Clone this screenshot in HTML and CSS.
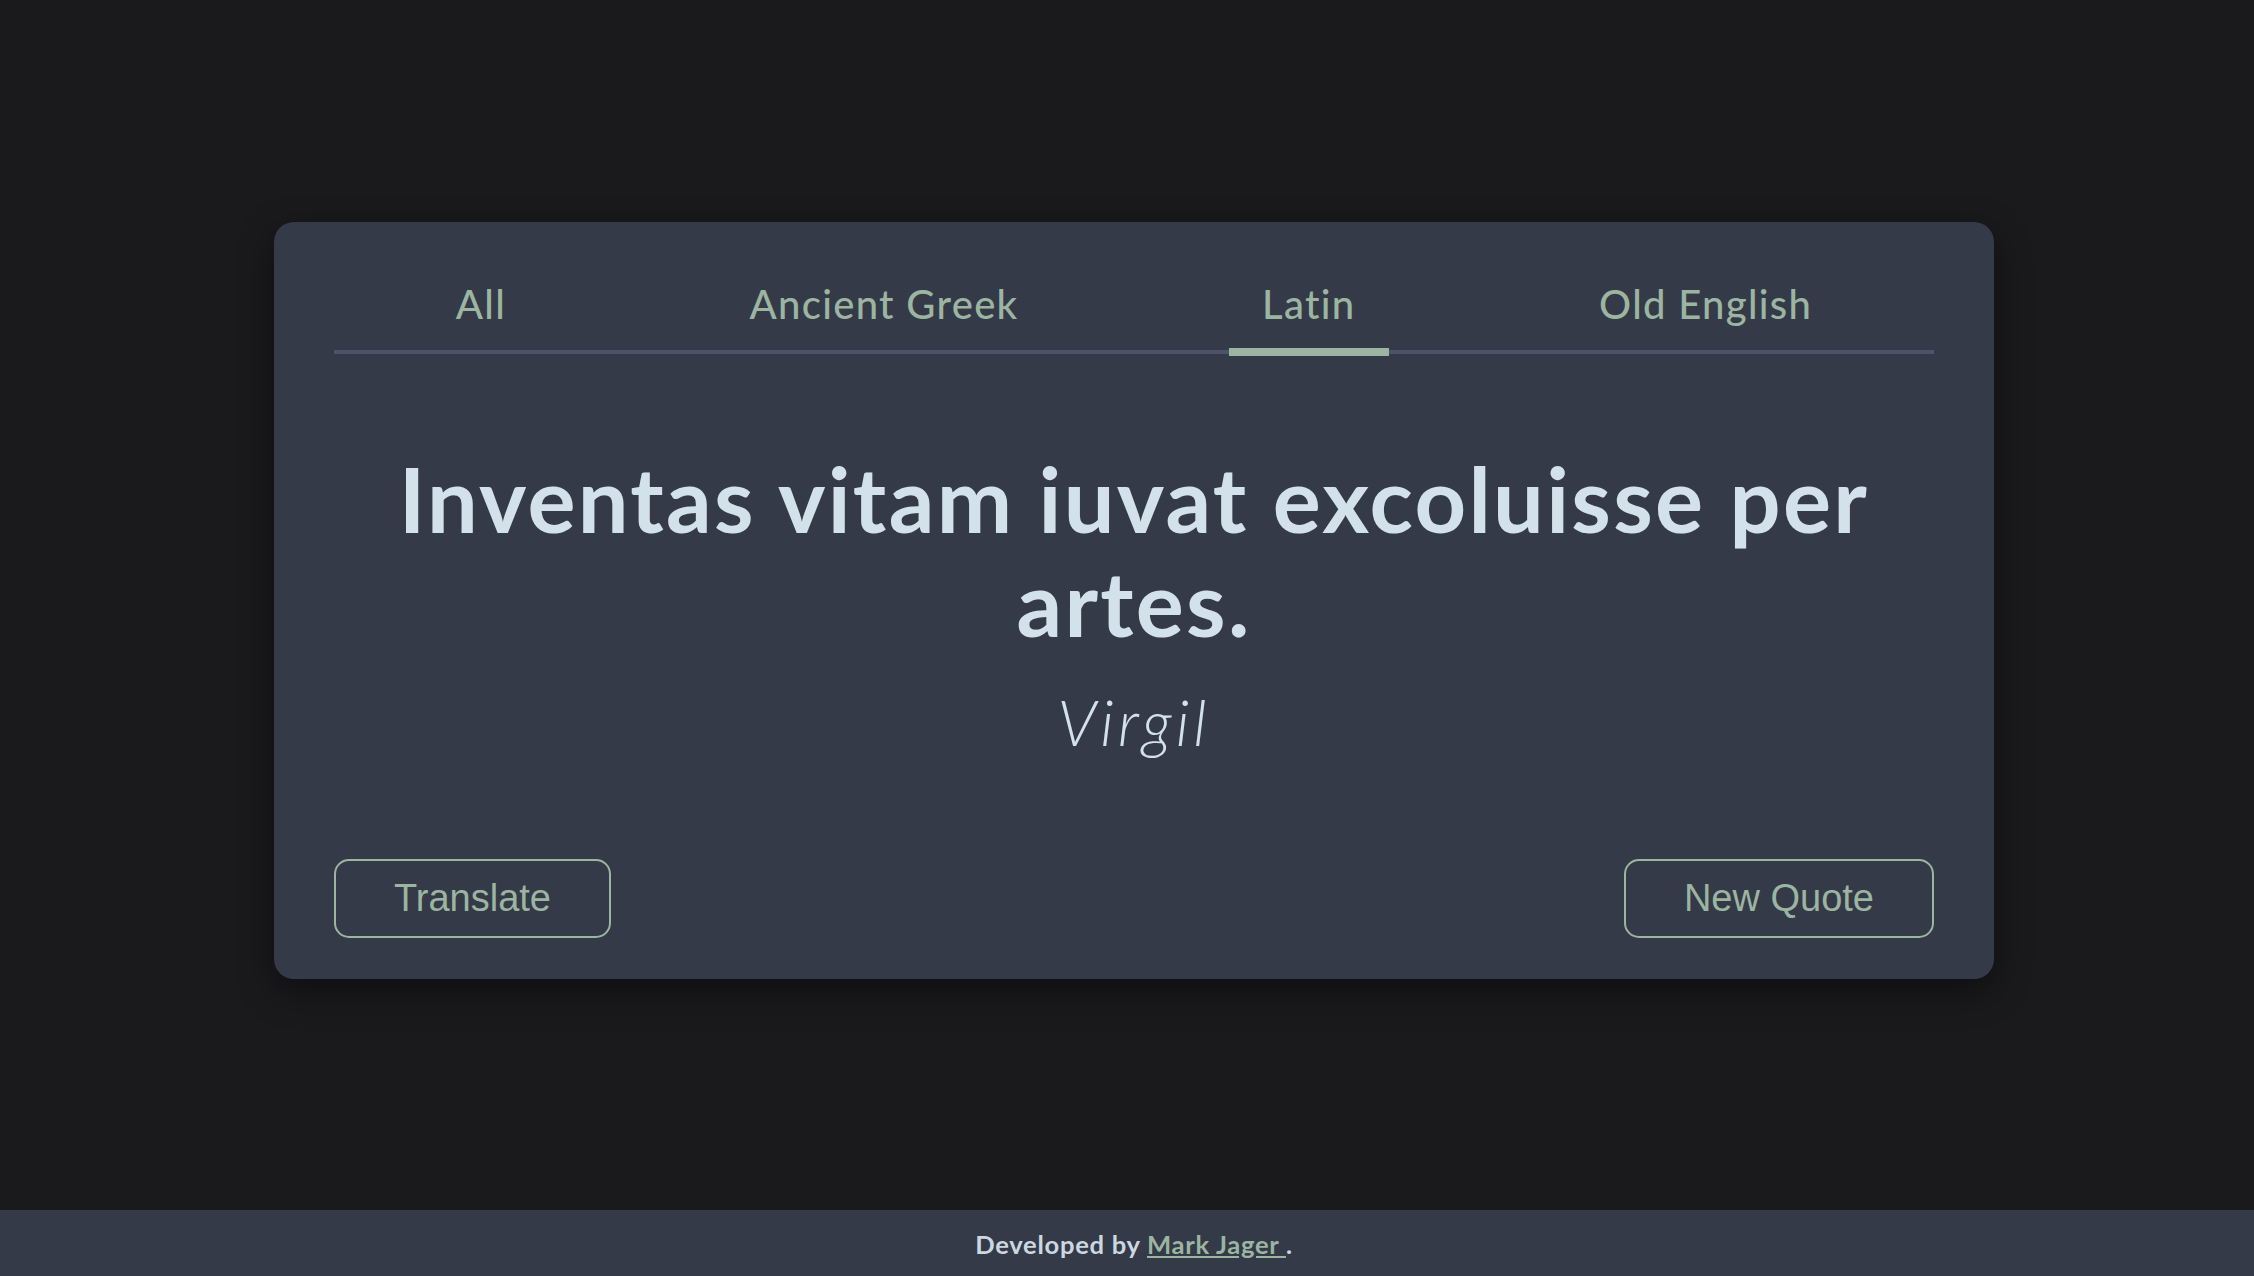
FILE: index.html
```html
<!DOCTYPE html>
<html lang="en">
<head>
<meta charset="utf-8">
<title>Quote Generator</title>
<link rel="stylesheet" href="styles.css">
</head>
<body>
<main class="main">
  <section class="card">
    <nav class="tabs">
      <a class="tab">All</a>
      <a class="tab">Ancient Greek</a>
      <a class="tab active">Latin</a>
      <a class="tab">Old English</a>
    </nav>
    <h1 class="quote">Inventas vitam iuvat excoluisse per artes.</h1>
    <p class="author">Virgil</p>
    <div class="actions">
      <button class="btn">Translate</button>
      <button class="btn">New Quote</button>
    </div>
  </section>
</main>
<footer class="footer">
  Developed by <a class="footer-link">Mark Jager </a>.
</footer>
</body>
</html>
```

FILE: styles.css
```css
html, body {
  margin: 0;
  padding: 0;
}
body {
  background: #1a1a1d;
  min-height: 100vh;
  display: flex;
  flex-direction: column;
  font-family: Lato, "Noto Sans", sans-serif;
}
.main {
  flex: 1;
  display: flex;
  align-items: center;
  justify-content: center;
  padding: 0 0 10px 14px;
}
.card {
  width: 1720px;
  box-sizing: border-box;
  background: #353a49;
  border-radius: 20px;
  padding: 58px 60px 41px;
  box-shadow: 0 12px 36px rgba(0, 0, 0, 0.45);
}
.tabs {
  display: flex;
  justify-content: space-around;
  border-bottom: 4px solid #4b5568;
}
.tab {
  position: relative;
  padding: 0 33px 22px;
  font-size: 40px;
  line-height: 48px;
  font-weight: 500;
  color: #9bb5a0;
  letter-spacing: 1.3px;
  cursor: pointer;
}
.tab.active::after {
  content: "";
  position: absolute;
  left: 0;
  right: 0;
  bottom: -6px;
  height: 8px;
  background: #9bb5a0;
}
.quote {
  margin: 92px 0 0;
  text-align: center;
  font-size: 90px;
  line-height: 104px;
  font-weight: 700;
  color: #d3e2ea;
  letter-spacing: 2.3px;
}
.author {
  margin: 30px 0 0;
  text-align: center;
  font-size: 64px;
  line-height: 76px;
  font-style: italic;
  font-weight: 300;
  color: #d3e2ea;
  letter-spacing: 4px;
}
.actions {
  margin-top: 99px;
  display: flex;
  justify-content: space-between;
}
.btn {
  background: transparent;
  border: 2px solid #9bb5a0;
  border-radius: 15px;
  color: #9bb5a0;
  font-family: "Liberation Sans", Arial, sans-serif;
  font-size: 38px;
  line-height: 44px;
  padding: 15.5px 58px;
  cursor: pointer;
}
.footer {
  height: 66px;
  box-sizing: border-box;
  padding-left: 14px;
  background: #343a48;
  text-align: center;
  line-height: 68px;
  font-size: 25.6px;
  font-weight: 700;
  color: #cbd8e0;
  letter-spacing: 0.7px;
}
.footer-link {
  color: #9bb5a0;
  text-decoration: underline;
  cursor: pointer;
}
```
